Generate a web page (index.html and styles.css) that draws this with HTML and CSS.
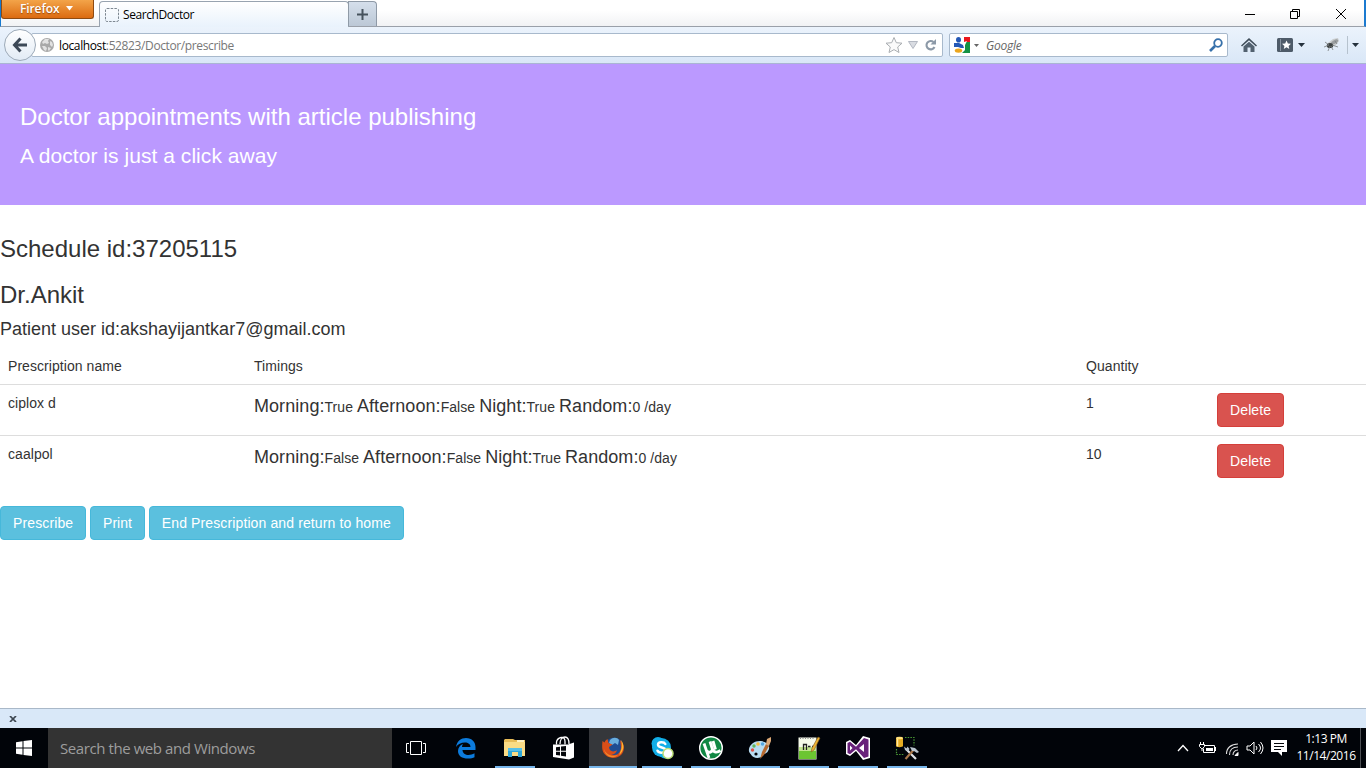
FILE: index.html
```
<!DOCTYPE html>
<html lang="en">
<head>
<meta charset="utf-8">
<title>SearchDoctor</title>
<link rel="stylesheet" href="styles.css">
</head>
<body>
<div class="screen">
  <div class="tabstrip">
    <div class="firefox-menu"><span class="firefox-label">Firefox</span><svg width="7" height="5" viewBox="0 0 7 5"><path d="M0 0h7L3.500 4.500z" fill="#fff"/></svg></div>
    <div class="tab"><svg width="14" height="14" viewBox="0 0 14 14"><rect x=".5" y=".5" width="13" height="13" rx="1.500" fill="none" stroke="#7d8791" stroke-dasharray="2.500 1.200"/></svg><span class="tab-title">SearchDoctor</span></div>
    <div class="newtab"><svg width="11" height="11" viewBox="0 0 11 11"><path d="M5.500 0v11M0 5.500h11" stroke="#46525d" stroke-width="2"/></svg></div>
    <div class="window-controls">
      <svg width="110" height="12" viewBox="0 0 110 12" fill="none" stroke="#000"><path d="M0 6.500h10M45.500 3.500h7v7h-7zM47.500 3.500v-2h7v7h-2M91 1l10 10M101 1l-10 10"/></svg>
    </div>
  </div>
  <div class="navbar">
    <div class="back"><svg width="16" height="16" viewBox="0 0 16 16" fill="none" stroke="#3d4957" stroke-width="3"><path d="M8.500 1.500L2.500 8L8.500 14.500M3 8h12"/></svg></div>
    <div class="urlbar">
      <svg class="globe" width="14" height="14" viewBox="0 0 14 14"><circle cx="7" cy="7" r="7" fill="#a9a9a9"/><path d="M5 1l4 0-1 2 1 2-2 1-2-1-2 1-1-2zM10 3l2 1 1 3-1 2-2-2zM2 8l3 0 2 2-1 3-2-1zM8 9l3 1-2 3-1-1z" fill="#e2e2e2"/></svg>
      <span class="url"><span class="host">localhost</span>:52823/Doctor/prescribe</span>
      <svg class="star" width="52" height="16" viewBox="0 0 52 16"><path d="M9 .5l2.300 5.200 5.700.5-4.300 3.800 1.300 5.500-5-2.900-5 2.900L5.300 10 1 6.200l5.700-.5z" fill="#fafafa" stroke="#a9adb1"/><path d="M23.500 4.500h9l-4.500 7z" fill="#d9dce2" stroke="#b3b8c2"/><path d="M48.500 5A4.200 4.200 0 1 0 49.500 10" fill="none" stroke="#8c99a7" stroke-width="2.100"/><path d="M51 2v5.500h-5.500z" fill="#8c99a7"/></svg>
    </div>
    <div class="searchbar">
      <svg width="16" height="16" viewBox="0 0 16 16"><path d="M9 0h7v5H9z" fill="#ea161c"/><path d="M8 5h8v11H7z" fill="#149245"/><path d="M7 0h3l0 5 3-1-2 4 0 5-3 3H0V0z" fill="#fff"/><ellipse cx="4.500" cy="2.800" rx="2.500" ry="2.800" fill="#2458b6"/><path d="M0 6h5l4 2 1 3-3 0-3-1-4 0z" fill="#2458b6"/><ellipse cx="4.500" cy="13.600" rx="3.700" ry="2.200" fill="#eca51c"/></svg>
      <svg class="engine-arrow" width="5" height="3" viewBox="0 0 5 3"><path d="M0 0h5L2.500 3z" fill="#666"/></svg>
      <span class="engine">Google</span>
      <svg class="lens" width="14" height="14" viewBox="0 0 14 14" fill="none" stroke="#3670aa"><circle cx="9" cy="5" r="3.800" stroke-width="1.800"/><path d="M6 8l-5 5" stroke-width="2.600"/></svg>
    </div>
    <svg class="home" width="16" height="16" viewBox="0 0 16 16"><path d="M0 8.500L8 1l8 7.500-1 1L8 3.200 1 9.500z" fill="#3f4c59"/><path d="M2.500 9.500L8 4.800l5.500 4.700V15h-4v-4.500h-3V15h-4z" fill="#526170"/></svg>
    <svg class="bookmarks" width="28" height="14" viewBox="0 0 28 14"><rect width="16" height="14" rx="1.500" fill="#4e5b69"/><path d="M3.500 1v12" stroke="#8793a0"/><path d="M9.500 2.500l1.400 3 3.100.3-2.400 2.100.7 3.100-2.800-1.700L6.800 11l.6-3.100L5 5.800l3.200-.3z" fill="#fff"/><path d="M21 5h7l-3.500 4z" fill="#25313d"/></svg>
    <svg class="fly" width="36" height="18" viewBox="0 0 36 18"><path d="M4 7l5-4 5-1 1 3-3 4-4 2z" fill="#c9cccd"/><ellipse cx="10.500" cy="6" rx="4" ry="1.800" transform="rotate(-30 10.500 6)" fill="#9a9ea0"/><ellipse cx="6" cy="9.500" rx="3.200" ry="2.600" fill="#3d4243"/><path d="M1 6l4 3M0 11l5-2M4 15l2-5M9 14l-2-4M8 9l6 2M11 5l2 3" fill="none" stroke="#777c7e" stroke-width=".8"/><path d="M23.500 0v18" stroke="#b6c2ce"/><path d="M28 7h7l-3.500 4z" fill="#25313d"/></svg>
  </div>

  <main class="page">
    <header class="banner">
      <h3 class="banner-title">Doctor appointments with article publishing</h3>
      <p class="banner-sub">A doctor is just a click away</p>
    </header>
    <h3 class="heading">Schedule id:37205115</h3>
    <h3 class="heading doctor">Dr.Ankit</h3>
    <h4 class="patient">Patient user id:akshayijantkar7@gmail.com</h4>
    <table class="prescriptions">
      <colgroup><col class="c-name"><col class="c-time"><col class="c-qty"><col></colgroup>
      <tr class="head"><td>Prescription name</td><td>Timings</td><td>Quantity</td><td></td></tr>
      <tr><td>ciplox d</td><td class="timing"><span class="dose">Morning:</span>True <span class="dose">Afternoon:</span>False <span class="dose">Night:</span>True <span class="dose">Random:</span>0 /day</td><td>1</td><td><button class="btn danger">Delete</button></td></tr>
      <tr><td>caalpol</td><td class="timing"><span class="dose">Morning:</span>False <span class="dose">Afternoon:</span>False <span class="dose">Night:</span>True <span class="dose">Random:</span>0 /day</td><td>10</td><td><button class="btn danger">Delete</button></td></tr>
    </table>
    <div class="actions">
      <button class="btn info">Prescribe</button>
      <button class="btn info print">Print</button>
      <button class="btn info">End Prescription and return to home</button>
    </div>
  </main>

  <div class="addonbar"><svg width="8" height="6" viewBox="0 0 8 6"><path d="M1 0l6 6M7 0L1 6" stroke="#3d4650" stroke-width="1.700"/></svg></div>

  <div class="taskbar">
    <div class="start"><svg width="16" height="16" viewBox="0 0 16 16"><path d="M0 2.200L6.500 1.300V7.500H0zM7.500 1.100L16 0v7.500H7.500zM0 8.500h6.500v6.200L0 13.800zM7.500 8.500H16V16l-8.500-1.100z" fill="#fff"/></svg></div>
    <div class="cortana">Search the web and Windows</div>
    <div class="task view"><svg width="20" height="14" viewBox="0 0 20 14" fill="none" stroke="#fff"><path d="M4.500.5h11v13h-11zM3 2.500H.5v9H3M17 2.500h2.500v9H17"/></svg></div>
    <div class="task"><svg width="24" height="24" viewBox="0 0 24 24"><path d="M2 11C3 5 7 2 12 2c6 0 9.500 4 9.500 9v3H8.500c0 3 3 5 6 5 2 0 4-.5 6-1.700v4C19 22.300 17 22.500 14 22.500 8 22.500 4 20 4 15c0-3 2-6 5-7-.7 1-1 2-1 3h8.500C16.500 8 14 6.500 11 6.500 7 6.500 4 8 2 11z" fill="#0c7bdc"/></svg></div>
    <div class="task open"><svg width="24" height="24" viewBox="0 0 24 24"><path d="M1 4l1-1h8l2 1h10v16H1z" fill="#e9bd58"/><path d="M1 6h21v14H1z" fill="#fbdc85"/><path d="M14 4h7v2h-7z" fill="#fff2c4"/><path d="M5 12h14v9h-4v-5H9v5H5z" fill="#2fa7d8"/><path d="M5 12h14v3H5z" fill="#58c0e8"/></svg></div>
    <div class="task"><svg width="24" height="24" viewBox="0 0 24 24"><path d="M1 8.500h15l6-2v15l-5 2L1 21z" fill="#fff"/><path d="M4.500 8.500V6C5 3 7 2 9 1.500s4 .5 4 4v3M8 8c0-4 2-7 5-7s4 2 4 7" fill="none" stroke="#fff" stroke-width="1.300"/><path d="M4 11.200l4-.5v4H4zM9 10.500l5-.6v4.800H9zM4 15.700h4v3.900l-4-.5zM9 15.700h5v4.700l-5-.7z" fill="#05070b"/></svg></div>
    <div class="task open active"><svg width="24" height="24" viewBox="0 0 24 24"><circle cx="13" cy="11" r="9.500" fill="#1f4d92"/><path d="M9 4c3-3 7-3 9 0l-1 5-3-2-3 2-3-2z" fill="#6aaedd"/><path d="M1.500 5l2 1.500C4 5 5 4 6.500 3l1 4 4 1.500-2 1.500-1.500 1c0 4 4 6 8 3-1 4-4 5-6 4 5 3 10-1 10-7l-1-7c5 4 5 11 1 15-7 6-17 2-18.500-5C1 12 1 9 1.500 5z" fill="#d94e19"/><path d="M20 4c4 5 3 11-2 15 2-4 4-9 2-15z" fill="#ffb52f"/><path d="M3 13c2 6 8 8 14 6-5 4.500-13 2-14-6z" fill="#f28a2a"/></svg></div>
    <div class="task open"><svg width="24" height="24" viewBox="0 0 24 24"><circle cx="8" cy="7.500" r="6.500" fill="#12aee8"/><circle cx="15" cy="16" r="6.500" fill="#12aee8"/><circle cx="11.500" cy="11.500" r="9.500" fill="#12aee8"/><path d="M15.300 8C14 5.500 8 5.500 8 8.700c0 3.700 7.500 2 7.500 5.500 0 3-6.500 3.300-8 .5" fill="none" stroke="#fff" stroke-width="2.500" stroke-linecap="round"/><circle cx="18" cy="17.500" r="5" fill="#fff" stroke="#bade78" stroke-width="1.500"/></svg></div>
    <div class="task open"><svg width="24" height="24" viewBox="0 0 24 24"><circle cx="12" cy="12" r="11.300" fill="#118844" stroke="#fff" stroke-width="1.400"/><path d="M5 7.500L10 22M7.500 14.500c2.500 3.500 7 1 5.500-2.500L11 5.500M13.500 13c1 3.500 4.500 4 8 1.500M16.500 13.500L14 5" fill="none" stroke="#fff" stroke-width="2.800"/></svg></div>
    <div class="task open"><svg width="24" height="24" viewBox="0 0 24 24"><path d="M1 13C2 8 7 4.500 13 5c7 1 10 6 7 10-1 3-4 2-5 4-2 4-10 4-12-.500-1.500-1.500-2.500-3-2-5.500z" fill="#b9dcf1"/><circle cx="4.500" cy="14" r="1.700" fill="#df5246"/><circle cx="6" cy="10" r="1.700" fill="#62b75b"/><circle cx="10" cy="8" r="1.800" fill="#f5bc45"/><circle cx="14.500" cy="8" r="1.700" fill="#55a6df"/><circle cx="8" cy="18" r="1.600" fill="#05070b"/><path d="M12 23l2-7 4-8 3 2-5 9z" fill="#b66a31"/><path d="M18 8l1-5 4-2 0 4-2 5z" fill="#dca876"/></svg></div>
    <div class="task open"><svg width="24" height="24" viewBox="0 0 24 24"><path d="M1.500 1.500h18v22h-18z" fill="#f6faeb"/><path d="M2 11h17v5H2z" fill="#c2e68f"/><path d="M2 15h17v8H2z" fill="#6cc532"/><path d="M3.500 1v2M6 1v2M8.500 1v2M11 1v2M13.500 1v2M16 1v2" stroke="#888"/><path d="M6.500 14V8.500h3V14M11 10.500h2.500M15 10.500h2.500" fill="none" stroke="#222" stroke-width="1.300"/><path d="M14 16l1-4 6-11 2 1-6 12z" fill="#efb432" stroke="#7e5a21" stroke-width=".6"/></svg></div>
    <div class="task open"><svg width="24" height="24" viewBox="0 0 24 24"><path d="M0 6l4-2 6 5 7-9 7 2v20l-7 2-7-9-6 5-4-2z" fill="#fff"/><path d="M1.500 7L4 5.800l6 5L18 2l4.500 1.500v17L18 22l-8-8.700-6 5-2.500-1.200zM4 9.500v5L6.500 12zM18 8l-5 4 5 4z" fill="#68217a" fill-rule="evenodd"/></svg></div>
    <div class="task open"><svg class="sql" width="24" height="24" viewBox="0 0 24 24"><path d="M1 2v8c0 1.500 7 1.500 7 0V2z" fill="#e6ac22"/><path d="M2.500 2v8.500" stroke="#ffe9a0" stroke-width="1.500"/><ellipse cx="4.500" cy="2" rx="3.500" ry="1.300" fill="#ffe07a"/><path d="M10 1.500h9v8M1.500 13v5.500h8" fill="none" stroke="#4a9935" stroke-width="1.200" stroke-dasharray="1.500 1.200"/><path d="M11 13l10 10" stroke="#e0e3e8" stroke-width="2.200"/><path d="M10.500 23l8-9" stroke="#a8764a" stroke-width="2.200"/><path d="M15 11l5 1 4 4-2 1-3-2-2 0zM9 10.500l1 3.500 3 1 1.500-2-2-2.500-1 2z" fill="#b9c3ce"/></svg></div>
    <div class="tray">
      <svg width="98" height="18" viewBox="0 0 98 18" fill="none" stroke="#fff"><path d="M1 12l5-5.500L11 12" stroke-width="1.300"/><path d="M27.500 6.500h10v7h-11v-4M38.500 8v4M23.500 3v2M26.500 3v2M22.500 5.500h5v2l-2 2h-1l-2-2zM25 9v3"/><path d="M29 9h7v3h-7z" fill="#fff" stroke="none"/><path d="M49.500 15C49.500 9 54 5 61 5M52.500 16c0-5 3-8 8.500-8M56 16c0-3 2-5 5-5" stroke="#ddd" stroke-width="1.100"/><path d="M58 16.500l3-3v3z" fill="#fff"/><path d="M70 7h3l4-4v12l-4-4h-3zM79 7q2 2 0 4M81.500 5q4 4 0 8M83.500 3q5 6 0 12"/></svg>
      <svg class="action" width="16" height="16" viewBox="0 0 16 16"><path d="M0 0h16v12h-5v4l-4-4H0z" fill="#fff"/><path d="M3 3.500h10M3 6.500h10M3 9.500h7" stroke="#05070b"/></svg>
      <div class="clock">1:13 PM<br>11/14/2016</div>
    </div>
  </div>
</div>
</body>
</html>
```
FILE: styles.css
```
* { box-sizing: border-box; }
body { margin: 0; background: #fff; font-family: "Liberation Sans", Arial, sans-serif; font-size: 14px; line-height: 20px; color: #333; }
svg { display: block; flex: none; }
.screen { width: 1366px; height: 768px; display: flex; flex-direction: column; overflow: hidden; }

.tabstrip { height: 27px; display: flex; align-items: flex-end; background: linear-gradient(#fff 40%, #f1f2f4); border-bottom: 1px solid #9aa0a9; border-left: 1px solid #1779cf; border-right: 2px solid #1b7ad0; flex: none; font-family: "Open Sans", sans-serif; }
.firefox-menu { width: 93px; height: 19px; align-self: flex-start; display: flex; align-items: center; gap: 7px; padding: 0 0 1px 18px; background: linear-gradient(#f3a449, #dc6b11); border: 1px solid #8f4b12; border-top: 0; border-radius: 0 0 3px 3px; }
.firefox-label { color: #fff; font-size: 12px; font-weight: 600; letter-spacing: -.1px; text-shadow: 0 1px 1px #9c4a09; }
.tab { width: 250px; height: 26px; margin: 0 0 -1px 5px; display: flex; align-items: center; gap: 4px; padding: 1px 0 0 5px; background: linear-gradient(#fff, #e9f2fc); border: 1px solid #98a3b0; border-bottom: 0; border-radius: 4px 4px 0 0; color: #000; font-size: 12px; }
.tab-title { letter-spacing: -.42px; }
.newtab { width: 29px; height: 25px; margin-left: -1px; display: flex; align-items: center; justify-content: center; padding-top: 1px; background: linear-gradient(#d5dfeb, #bcc8d6); border: 1px solid #8f9aa7; border-radius: 0 4px 0 0; border-bottom: 0; }
.window-controls { margin: 0 9px 6px auto; }

.navbar { height: 37px; display: flex; align-items: center; padding: 0 6px 0 4px; background: linear-gradient(#ebf3fc, #d9e7f7); border-bottom: 1px solid #aab5d3; flex: none; font-family: "Open Sans", sans-serif; font-size: 12px; }
.back { width: 32px; height: 32px; flex: none; display: flex; align-items: center; justify-content: center; border: 1px solid #9daab8; border-radius: 50%; background: linear-gradient(#fff, #e2ebf5); z-index: 1; }
.urlbar { width: 912px; height: 24px; margin-left: -5px; display: flex; align-items: center; padding: 0 5px 0 8px; border: 1px solid #a8b9cc; border-radius: 2px; background: #fff; }
.url { margin-left: 5px; padding-top: 1px; color: #777; font-size: 12px; letter-spacing: -.38px; white-space: nowrap; }
.host { color: #000; }
.star { margin-left: auto; }
.searchbar { width: 279px; height: 24px; margin-left: 6px; display: flex; align-items: center; padding: 0 4px; border: 1px solid #a8b9cc; border-radius: 2px; background: #fff; }
.engine-arrow { margin-left: 4px; }
.engine { margin-left: 7px; padding-top: 1px; font-style: italic; color: #666; font-size: 12px; letter-spacing: -.25px; }
.lens { margin-left: auto; }
.home { margin-left: 13px; }
.bookmarks { margin-left: 20px; }
.fly { margin-left: auto; }

.page { flex: 1; min-height: 0; }
.banner { height: 141px; padding: 39px 20px 0; background: #bb99ff; color: #fff; }
.banner-title { margin: 0; font-size: 24px; line-height: 27px; font-weight: 400; }
.banner-sub { margin: 11px 0 0; font-size: 21px; line-height: 30px; font-weight: 400; letter-spacing: .05px; }
.heading { margin: 31px 0 0; font-size: 24px; line-height: 26px; font-weight: 400; }
.doctor { margin-top: 20px; }
.patient { margin: 11px 0 9px; font-size: 18px; line-height: 20px; font-weight: 400; }
.prescriptions { width: 100%; table-layout: fixed; border-collapse: collapse; letter-spacing: .06px; }
.prescriptions td { padding: 8px; border-top: 1px solid #ddd; vertical-align: top; }
.prescriptions .head td { border-top: 0; }
.prescriptions .timing { padding-top: 11px; letter-spacing: .06px; }
.c-name { width: 246px; }
.c-time { width: 832px; }
.c-qty { width: 131px; }
.dose { font-size: 18px; line-height: 20px; }
.btn { display: inline-block; height: 34px; padding: 6px 12px; border: 1px solid; border-radius: 4px; color: #fff; font: 14px/20px "Liberation Sans", Arial, sans-serif; letter-spacing: .12px; vertical-align: top; }
.danger { background: #d9534f; border-color: #d43f3a; }
.info { background: #5bc0de; border-color: #46b8da; }
.print { letter-spacing: 0; }
.actions { margin-top: 20px; }

.addonbar { height: 20px; flex: none; padding: 7px 0 0 9px; background: #d9e8f8; border-top: 1px solid #a9b8c8; }

.taskbar { height: 40px; flex: none; display: flex; gap: 1px; background: #010409; }
.start { width: 47px; padding: 12px 0 0 16px; }
.cortana { width: 344px; margin-right: -1px; padding-left: 12px; background: #333; color: #9d9d9d; font: 15px/40px "Open Sans", sans-serif; letter-spacing: -.42px; }
.task { width: 48px; display: flex; justify-content: center; padding-top: 8px; }
.view { margin-right: 1px; padding-top: 13px; }
.open { background: linear-gradient(#76b5ea, #76b5ea) 4px 38px / 40px 2px no-repeat; }
.active { background: linear-gradient(#76b5ea, #76b5ea) 0 38px / 48px 2px no-repeat #35373b; }
.tray { margin-left: auto; display: flex; align-items: center; }
.action { margin: 0 9px 0 -4px; }
.clock { width: 65px; margin-right: 5px; padding-right: 4px; border-right: 1px solid #4c4f53; height: 40px; padding-top: 2px; color: #fff; font: 12px/17px "Open Sans", sans-serif; letter-spacing: -.45px; text-align: center; white-space: nowrap; }
```
